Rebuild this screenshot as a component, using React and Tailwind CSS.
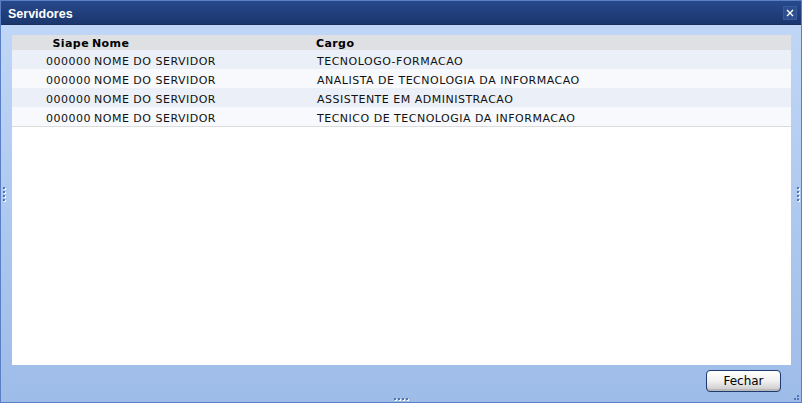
import React from "react";

const rows = [
  ["000000", "NOME DO SERVIDOR", "TECNOLOGO-FORMACAO"],
  ["000000", "NOME DO SERVIDOR", "ANALISTA DE TECNOLOGIA DA INFORMACAO"],
  ["000000", "NOME DO SERVIDOR", "ASSISTENTE EM ADMINISTRACAO"],
  ["000000", "NOME DO SERVIDOR", "TECNICO DE TECNOLOGIA DA INFORMACAO"],
];

function Grip({ vertical }) {
  const dots = [0, 1, 2, 3];
  return (
    <div className={vertical ? "flex flex-col gap-[2px]" : "flex flex-row gap-[2px]"}>
      {dots.map((d) => (
        <div key={d} className="w-[2px] h-[2px] bg-[#4f74b8] shadow-[1px_1px_0_#ffffff]" />
      ))}
    </div>
  );
}

export default function App() {
  return (
    <div
      className="w-[802px] h-[403px] flex flex-col overflow-hidden border border-[#5a7fc4] bg-gradient-to-b from-[#c2d8f7] to-[#9dbce8] relative"
      style={{ fontFamily: '"DejaVu Sans", Verdana, sans-serif' }}
    >
      {/* Title bar */}
      <div className="h-[24px] shrink-0 flex items-center justify-between pl-[7px] pr-[4px] bg-gradient-to-b from-[#27498c] to-[#1b366d] border-b border-[#17305f]">
        <span className="text-white text-[12.5px] font-bold mt-[4px]" style={{ fontFamily: '"Liberation Sans", Arial, sans-serif' }}>Servidores</span>
        <div className="w-[14px] h-[14px] bg-[#2d4f8f] border border-[#355aa0] flex items-center justify-center mt-[1px]">
          <svg width="8" height="8" viewBox="0 0 8 8">
            <path d="M1 1 L7 7 M7 1 L1 7" stroke="#ffffff" strokeWidth="1.4" />
          </svg>
        </div>
      </div>

      {/* Body */}
      <div className="flex-1 flex flex-col px-[11px] pt-[10px]">
        <div className="flex-1 bg-white flex flex-col mr-[-1px]">
          <div className="h-[15px] bg-[#dfe0e3] flex items-center text-[11px] font-bold text-black tracking-[0.4px] pt-[4px]">
            <div className="w-[80px] text-right pr-[3px]">Siape</div>
            <div className="w-[224px]">Nome</div>
            <div>Cargo</div>
          </div>
          {rows.map((r, i) => (
            <div
              key={i}
              className={`h-[19px] flex items-center text-[11px] text-[#111] tracking-[0.5px] pt-[5px] ${i % 2 === 0 ? "bg-[#ebf0f8]" : "bg-[#f7f9fc]"}`}
            >
              <div className="w-[80px] text-right pr-[1px]">{r[0]}</div>
              <div className="w-[225px] pl-[2px]">{r[1]}</div>
              <div>{r[2]}</div>
            </div>
          ))}
          <div className="h-px bg-[#dcdcdc]" />
        </div>
        <div className="h-[37px] flex items-start justify-end pr-[9px] pt-[5px] shrink-0">
          <button className="w-[75px] h-[22px] rounded-[4px] border border-[#1e3a6e] bg-gradient-to-b from-[#ffffff] via-[#f0f0f0] to-[#c8c8c8] text-[12px] text-black flex items-center justify-center shadow-[inset_0_-2px_0_#b9b9b9]" style={{ fontFamily: '"DejaVu Sans", Tahoma, sans-serif' }}>
            Fechar
          </button>
        </div>
      </div>

      {/* Grips */}
      <div className="absolute left-[2px] top-[186px]"><Grip vertical /></div>
      <div className="absolute right-[2px] top-[186px]"><Grip vertical /></div>
      <div className="absolute left-[393px] bottom-[2px]"><Grip /></div>
      <div className="absolute right-[2px] bottom-[2px] w-[6px] h-[6px]">
        <div className="absolute right-0 bottom-0 w-[2px] h-[2px] bg-[#4f74b8]" />
        <div className="absolute right-[3px] bottom-0 w-[2px] h-[2px] bg-[#4f74b8]" />
        <div className="absolute right-0 bottom-[3px] w-[2px] h-[2px] bg-[#4f74b8]" />
      </div>
    </div>
  );
}
